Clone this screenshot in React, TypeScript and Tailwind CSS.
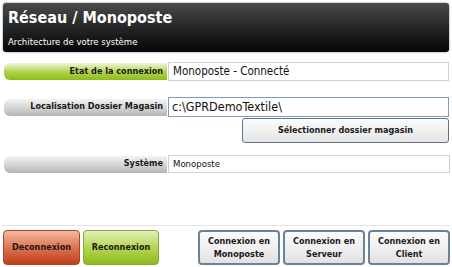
const font = { fontFamily: '"DejaVu Sans Condensed", "DejaVu Sans", sans-serif' };

const LabelBar = ({ text, green }: { text: string; green?: boolean }) => (
  <div
    className={`w-[163px] h-[17px] rounded-l-[6px] flex items-center justify-end pr-[4px] text-[9px] font-bold text-[#1a1a1a] ${
      green
        ? "bg-linear-to-b from-[#eef6d6] via-[#b5d54e] to-[#8cbc14]"
        : "bg-linear-to-b from-[#f4f4f4] via-[#d6d6d6] to-[#b4b4b4]"
    }`}
  >
    {text}
  </div>
);

const Btn = ({ children, className }: { children: React.ReactNode; className: string }) => (
  <button
    className={`h-[35px] rounded-[4px] text-[9px] font-bold leading-[13px] text-[#1a1a1a] flex items-center justify-center text-center ${className}`}
  >
    {children}
  </button>
);

export default function App() {
  return (
    <div className="w-[452px] h-[267px] bg-white flex flex-col" style={font}>
      <div className="mx-[3px] mt-[3px] h-[49px] rounded-[3px] bg-linear-to-b from-[#4a4a4a] to-[#070707] shadow-[0_0_2px_rgba(0,0,0,0.6)] px-[5px] pt-[5px]">
        <h1 className="text-[16px] leading-[20px] font-bold text-white">Réseau / Monoposte</h1>
        <p className="text-[9.5px] leading-[12px] text-white mt-[8px]">Architecture de votre système</p>
      </div>

      <div className="flex items-center pl-[4px] pr-[3px] mt-[10px]">
        <LabelBar text="Etat de la connexion" green />
        <div className="flex-1 ml-[1px] h-[19px] border border-[#d0d0d0] flex items-center px-[4px] text-[11.5px] text-[#111]">
          Monoposte - Connecté
        </div>
      </div>

      <div className="flex items-center pl-[4px] pr-[3px] mt-[16px]">
        <LabelBar text="Localisation Dossier Magasin" />
        <div className="flex-1 ml-[1px] h-[20px] border border-[#7f9db9] flex items-center px-[3px] text-[12.5px] text-[#111]">
          c:\GPRDemoTextile\
        </div>
      </div>

      <div className="flex justify-end pr-[3px] mt-[1px]">
        <button className="w-[207px] h-[25px] rounded-[3px] border border-[#5e7489] bg-linear-to-b from-[#fdfdfd] to-[#e4e4e4] text-[9px] font-bold text-[#1a1a1a]">
          Sélectionner dossier magasin
        </button>
      </div>

      <div className="flex items-center pl-[4px] pr-[2px] mt-[12px]">
        <LabelBar text="Système" />
        <div className="flex-1 ml-[1px] h-[18px] border border-[#d0d0d0] flex items-center px-[4px] text-[9.5px] text-[#111]">
          Monoposte
        </div>
      </div>

      <div className="flex-1" />

      <div className="mx-[2px] border-t border-[#e4e4e4]" />

      <div className="flex justify-between pl-[3px] pr-[2px] mt-[4px] mb-[2px]">
        <div className="flex gap-[3px]">
          <Btn className="w-[77px] border border-[#a6472a] bg-linear-to-b from-[#f3b9a2] via-[#dd7351] to-[#bf3d16]">
            Deconnexion
          </Btn>
          <Btn className="w-[76px] border border-[#8aa83a] bg-linear-to-b from-[#e3f0b6] via-[#b5d552] to-[#8dbb19]">
            Reconnexion
          </Btn>
        </div>
        <div className="flex gap-[3px]">
          <Btn className="w-[82px] border-2 border-[#6b8399] bg-linear-to-b from-[#fdfdfd] to-[#e2e2e2]">
            Connexion en<br />Monoposte
          </Btn>
          <Btn className="w-[82px] border-2 border-[#6b8399] bg-linear-to-b from-[#fdfdfd] to-[#e2e2e2]">
            Connexion en<br />Serveur
          </Btn>
          <Btn className="w-[82px] border-2 border-[#6b8399] bg-linear-to-b from-[#fdfdfd] to-[#e2e2e2]">
            Connexion en<br />Client
          </Btn>
        </div>
      </div>
    </div>
  );
}
